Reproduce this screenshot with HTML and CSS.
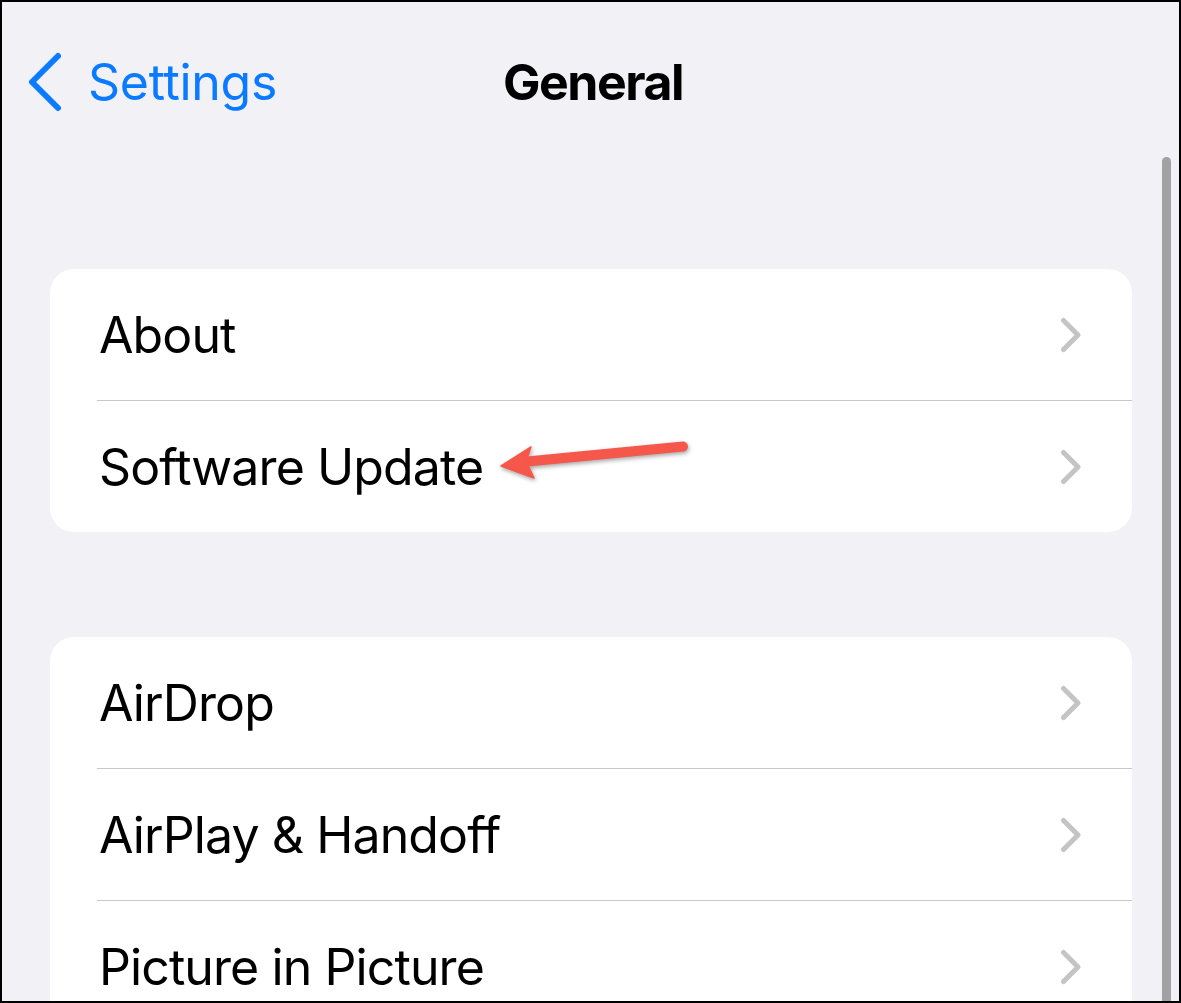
FILE: index.html
```html
<!DOCTYPE html>
<html>
<head>
<meta charset="utf-8">
<link rel="stylesheet" href="styles.css">
</head>
<body>
<div class="screen">
  <header class="nav">
    <div class="back">
      <svg class="back-icon" width="36" height="60" viewBox="0 0 36 60"><polyline points="30,4 4,30 30,56" fill="none" stroke="#0a7aff" stroke-width="6" stroke-linecap="round" stroke-linejoin="round"/></svg>
      <span class="back-label">Settings</span>
    </div>
    <h1 class="title">General</h1>
    <div></div>
  </header>

  <section class="card card-first">
    <div class="row"><span class="label">About</span><svg class="chev" width="22" height="36" viewBox="0 0 22 36"><polyline points="3.5,3.5 18,18 3.5,32.5" fill="none" stroke="#c4c4c7" stroke-width="5" stroke-linecap="round" stroke-linejoin="round"/></svg></div>
    <div class="row"><span class="label">Software Update</span><svg class="chev" width="22" height="36" viewBox="0 0 22 36"><polyline points="3.5,3.5 18,18 3.5,32.5" fill="none" stroke="#c4c4c7" stroke-width="5" stroke-linecap="round" stroke-linejoin="round"/></svg></div>
  </section>

  <section class="card card-second">
    <div class="row"><span class="label">AirDrop</span><svg class="chev" width="22" height="36" viewBox="0 0 22 36"><polyline points="3.5,3.5 18,18 3.5,32.5" fill="none" stroke="#c4c4c7" stroke-width="5" stroke-linecap="round" stroke-linejoin="round"/></svg></div>
    <div class="row"><span class="label">AirPlay &amp; Handoff</span><svg class="chev" width="22" height="36" viewBox="0 0 22 36"><polyline points="3.5,3.5 18,18 3.5,32.5" fill="none" stroke="#c4c4c7" stroke-width="5" stroke-linecap="round" stroke-linejoin="round"/></svg></div>
    <div class="row"><span class="label">Picture in Picture</span><svg class="chev" width="22" height="36" viewBox="0 0 22 36"><polyline points="3.5,3.5 18,18 3.5,32.5" fill="none" stroke="#c4c4c7" stroke-width="5" stroke-linecap="round" stroke-linejoin="round"/></svg></div>
  </section>

  <svg class="annot-arrow" width="230" height="80" viewBox="0 0 230 80">
    <line x1="42" y1="42" x2="203" y2="26.5" stroke="#f5574a" stroke-width="10" stroke-linecap="round"/>
    <path d="M21 46 L51 27 L46 41 L54 58 Z" fill="#f5574a" stroke="#f5574a" stroke-width="1.5" stroke-linejoin="round"/>
  </svg>

  <div class="scrollbar"></div>
</div>
</body>
</html>
```

FILE: styles.css
```css
html, body {
  margin: 0;
  padding: 0;
  background: #f2f2f7;
}

.screen {
  position: relative;
  width: 1181px;
  height: 1003px;
  box-sizing: border-box;
  border: 2px solid #000;
  background: #f1f1f6;
  overflow: hidden;
  font-family: "Inter", "Roboto", "Liberation Sans", sans-serif;
  color: #000;
}

.nav {
  display: grid;
  grid-template-columns: 1fr auto 1fr;
  align-items: center;
  height: 160px;
}

.back {
  display: flex;
  align-items: center;
  padding-left: 26px;
}

.back-icon {
  display: block;
}

.back-label {
  margin-left: 24px;
  font-size: 50px;
  color: #0a7aff;
  font-weight: 400;
  letter-spacing: -0.3px;
}

.title {
  margin: 0;
  padding-left: 5px;
  font-size: 50px;
  font-weight: 700;
  letter-spacing: -1.5px;
}

.card {
  margin: 0 47px 0 48px;
  background: #fff;
  border-radius: 24px;
}

.card-first {
  margin-top: 107px;
}

.card-second {
  margin-top: 105px;
}

.row {
  display: flex;
  align-items: center;
  justify-content: space-between;
  height: 131px;
  margin-left: 47px;
  padding-left: 2px;
  padding-right: 50px;
  border-bottom: 1px solid #c8c8cc;
}

.row:last-child {
  border-bottom: none;
}

.label {
  font-size: 50px;
  font-weight: 400;
  letter-spacing: -0.9px;
}

.chev {
  display: block;
}

.annot-arrow {
  position: absolute;
  left: 478px;
  top: 418px;
  filter: drop-shadow(1px 2px 2px rgba(0, 0, 0, 0.35));
}

.scrollbar {
  position: absolute;
  left: 1160px;
  top: 155px;
  width: 9px;
  height: 900px;
  border-radius: 5px;
  background: #a2a2a5;
}
```
